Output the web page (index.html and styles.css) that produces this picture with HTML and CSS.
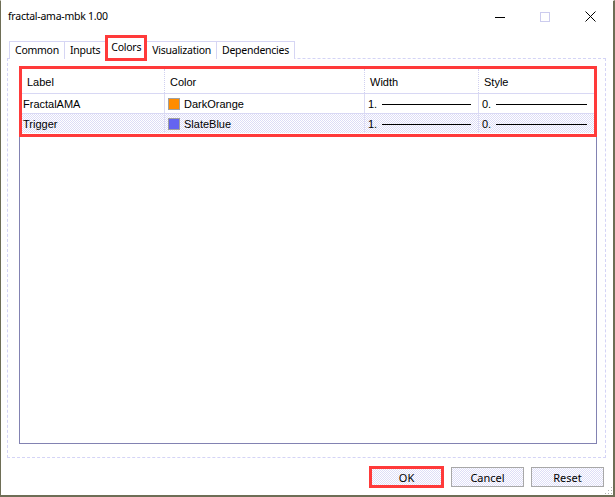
FILE: index.html
```html
<!DOCTYPE html>
<html>
<head>
<meta charset="utf-8">
<link rel="stylesheet" href="styles.css">
</head>
<body>
<div class="window">
  <div class="titlebar">
    <div class="title">fractal-ama-mbk 1.00</div>
    <div class="controls">
      <span class="ctl min"><svg width="10" height="10" viewBox="0 0 10 10"><path d="M0 5.5H10" stroke="#000" stroke-width="1"/></svg></span>
      <span class="ctl max"><svg width="10" height="10" viewBox="0 0 10 10"><rect x="0.5" y="0.5" width="9" height="9" fill="none" stroke="#ccccee" stroke-width="1"/></svg></span>
      <span class="ctl close"><svg width="11" height="11" viewBox="0 0 11 11"><path d="M0.5 0.5L10.5 10.5M10.5 0.5L0.5 10.5" stroke="#000" stroke-width="1"/></svg></span>
    </div>
  </div>
  <div class="tabs">
    <div class="tab">Common</div>
    <div class="tab">Inputs</div>
    <div class="tab active">Colors</div>
    <div class="tab">Visualization</div>
    <div class="tab">Dependencies</div>
  </div>
  <div class="panel">
    <div class="list">
      <div class="row head">
        <div class="cell c1">Label</div>
        <div class="cell c2">Color</div>
        <div class="cell c3">Width</div>
        <div class="cell c4">Style</div>
      </div>
      <div class="row item">
        <div class="cell c1">FractalAMA</div>
        <div class="cell c2"><span class="swatch orange"></span>DarkOrange</div>
        <div class="cell c3">1.<span class="line"></span></div>
        <div class="cell c4">0.<span class="line"></span></div>
      </div>
      <div class="row item sel">
        <div class="cell c1">Trigger</div>
        <div class="cell c2"><span class="swatch blue"></span>SlateBlue</div>
        <div class="cell c3">1.<span class="line"></span></div>
        <div class="cell c4">0.<span class="line"></span></div>
      </div>
      <div class="highlight"></div>
    </div>
  </div>
  <div class="buttons">
    <div class="btn ok">OK</div>
    <div class="btn">Cancel</div>
    <div class="btn">Reset</div>
  </div>
  <div class="grip"></div>
</div>
</body>
</html>
```

FILE: styles.css
```css
html, body {
  margin: 0;
  padding: 0;
  background: #fff;
}
.window {
  position: relative;
  width: 615px;
  height: 497px;
  box-sizing: border-box;
  border: 1px solid #6e6e56;
  border-top: 1px solid #ffffff;
  border-right-width: 2px;
  border-bottom-width: 2px;
  background: #fff;
  display: flex;
  flex-direction: column;
  font-family: "Noto Sans", "Open Sans", sans-serif;
  color: #000;
}
.titlebar {
  height: 31px;
  display: flex;
  align-items: center;
  justify-content: space-between;
}
.title {
  font-size: 10.5px;
  letter-spacing: -0.25px;
  padding-left: 7px;
  padding-bottom: 1px;
}
.controls {
  display: flex;
  align-items: center;
  height: 100%;
  padding-right: 17px;
}
.ctl {
  display: flex;
  align-items: center;
  justify-content: center;
}
.ctl.max { margin-left: 35px; }
.ctl.close { margin-left: 35px; }
.tabs {
  display: flex;
  align-items: flex-end;
  padding-left: 8px;
  height: 27px;
  margin-bottom: -1px;
  position: relative;
  z-index: 1;
}
.tab {
  font-size: 10.5px;
  letter-spacing: -0.25px;
  height: 17px;
  line-height: 17px;
  padding: 0 5px;
  border: 1px solid #d6d6f4;
  border-bottom: none;
  margin-left: -1px;
  background: #fff;
  white-space: nowrap;
}
.tab:first-child { margin-left: 0; }
.tab.active {
  height: 20px;
  line-height: 18px;
  border: 3px solid #ff3a3a;
  padding: 0 3px;
  margin-bottom: -2px;
  position: relative;
  z-index: 2;
}
.panel {
  margin: 0 7px 0 6px;
  height: 400px;
  box-sizing: border-box;
  border: 1px dashed #d4d4f6;
  padding: 7px 8px 13px 11px;
  display: flex;
}
.list {
  position: relative;
  flex: 1;
  border: 1px solid #8282b2;
  font-family: "Liberation Sans", Arial, sans-serif;
  font-size: 11px;
}
.row {
  display: grid;
  grid-template-columns: 143px 200px 114px 1fr;
  margin: 0 2px 0 1px;
}
.row.head { height: 24px; margin-top: 2px; }
.row.item {
  height: 20px;
  border-top: 1px solid #d8d8f4;
  box-sizing: border-box;
}
.row.sel {
  background: repeating-conic-gradient(#dcdcf6 0 25%, #ffffff 0 50%) 0 0 / 2px 2px;
}
.cell {
  display: flex;
  align-items: center;
  white-space: nowrap;
  border-left: 1px solid #dcdcf4;
  padding-left: 3px;
}
.head .cell {
  border-left: 1px dotted #d0d0f0;
  padding-left: 5px;
  padding-top: 2px;
}
.head .c1, .item .c1 { border-left: none; }
.head .c1 { padding-left: 6px; }
.item .c1 { padding-left: 2px; }
.swatch {
  width: 10px;
  height: 10px;
  border: 1px solid #a0a0a0;
  margin-right: 4px;
  flex: none;
}
.swatch.orange { background: #ff8c00; }
.swatch.blue { background: #6464f0; }
.line {
  flex: 1;
  height: 1px;
  background: #000;
  margin: 1px 7px 0 5px;
}
.highlight {
  position: absolute;
  left: -1px;
  top: -1px;
  right: -1px;
  height: 71px;
  box-sizing: border-box;
  border: 3px solid #ff3a3a;
  pointer-events: none;
}
.buttons {
  display: flex;
  justify-content: flex-end;
  gap: 7px;
  padding: 8px 9px 0 0;
}
.btn {
  width: 73px;
  height: 20px;
  box-sizing: border-box;
  border: 1px solid #a8a8a8;
  display: flex;
  align-items: center;
  justify-content: center;
  font-size: 11px;
  background: repeating-conic-gradient(#dedef7 0 25%, #ffffff 0 50%) 0 0 / 2px 2px;
  margin-top: 1px;
}
.btn.ok {
  width: 75px;
  height: 22px;
  margin-top: 0;
  border: 3px solid #ff3a3a;
}
.grip {
  position: absolute;
  right: 1px;
  bottom: 1px;
  width: 8px;
  height: 8px;
  background:
    radial-gradient(circle, #b0b0b0 0.8px, transparent 1px) 0 0 / 3px 3px;
  clip-path: polygon(100% 0, 100% 100%, 0 100%);
}
```
